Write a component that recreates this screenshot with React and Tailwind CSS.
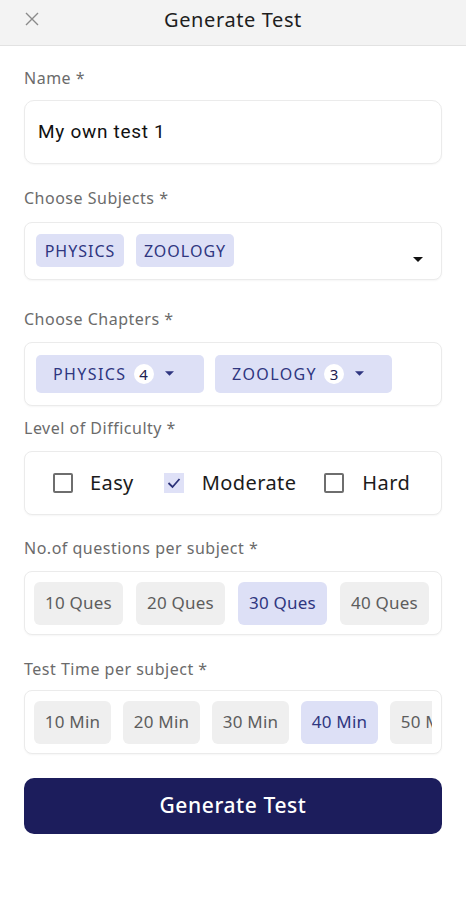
import React from "react";

const font = { fontFamily: '"Noto Sans", Lato, sans-serif' };

function Label({ children, className = "" }) {
  return (
    <div className={"text-[16px] leading-[20px] tracking-[0.5px] text-[#6b6b6b] " + className}>{children}</div>
  );
}

function Box({ children, className = "" }) {
  return (
    <div
      className={
        "rounded-[8px] border border-[#ebebeb] bg-white shadow-[0_1px_2px_rgba(0,0,0,0.04)] " +
        className
      }
    >
      {children}
    </div>
  );
}

function Caret({ className = "" }) {
  return (
    <svg width="10" height="6" viewBox="0 0 10 6" className={className}>
      <path d="M0 0 L10 0 L5 5 Z" fill="currentColor" />
    </svg>
  );
}

function Checkbox({ checked }) {
  if (checked)
    return (
      <div className="w-[20px] h-[20px] bg-[#dfe1f7] flex items-center justify-center">
        <svg width="14" height="12" viewBox="0 0 14 12">
          <path d="M1.5 6 L5.5 10 L12.5 2" fill="none" stroke="#2b3178" strokeWidth="1.8" />
        </svg>
      </div>
    );
  return <div className="w-[20px] h-[20px] border-[2px] border-[#6e6e6e] rounded-[2px]" />;
}

export default function App() {
  const ques = ["10 Ques", "20 Ques", "30 Ques", "40 Ques"];
  const mins = ["10 Min", "20 Min", "30 Min", "40 Min", "50 Min"];
  return (
    <div className="w-[466px] h-[900px] bg-white" style={font}>
      <div className="h-[46px] bg-[#f3f3f3] border-b border-[#e2e2e2] relative flex items-center justify-center">
        <svg width="14" height="14" viewBox="0 0 14 14" className="absolute left-[25px] top-[12px]">
          <path d="M1 1 L13 13 M13 1 L1 13" stroke="#8a8a8a" strokeWidth="1.4" />
        </svg>
        <div className="text-[20px] tracking-[0.6px] text-[#1e1e1e] -mt-[6px]">Generate Test</div>
      </div>

      <div className="px-[24px] pt-[22px]">
        <Label>Name *</Label>
        <Box className="mt-[12px] h-[64px] flex items-center px-[13px] rounded-[10px]">
          <span
            className="text-[19px] tracking-[0.7px] text-[#111]"
            style={{ fontFamily: 'Roboto, sans-serif' }}
          >
            My own test 1
          </span>
        </Box>

        <Label className="mt-[24px]">Choose Subjects *</Label>
        <Box className="mt-[14px] h-[58px] flex items-start pt-[11px] pl-[11px] pr-[16px] relative">
          <div className="flex gap-[12px]">
            {[
              ["PHYSICS", "w-[88px]"],
              ["ZOOLOGY", "w-[98px]"],
            ].map(([s, w]) => (
              <div
                key={s}
                className={
                  "h-[33px] rounded-[5px] bg-[#dde0f6] text-[#2f3680] text-[16px] flex items-center justify-center tracking-[1px] " +
                  w
                }
              >
                {s}
              </div>
            ))}
          </div>
          <Caret className="absolute right-[18px] top-[34px] text-[#111]" />
        </Box>

        <Label className="mt-[29px]">Choose Chapters *</Label>
        <Box className="mt-[13px] h-[64px] flex items-center pl-[11px] gap-[11px]">
          {[
            ["PHYSICS", "4", "w-[168px]"],
            ["ZOOLOGY", "3", "w-[177px]"],
          ].map(([s, n, w]) => (
            <div
              key={s}
              className={
                "h-[38px] rounded-[5px] bg-[#dde0f6] text-[#2f3680] text-[16px] flex items-center pl-[17px] gap-[7px] tracking-[1.4px] " +
                w
              }
            >
              <span>{s}</span>
              <span className="w-[20px] h-[20px] rounded-full bg-white flex items-center justify-center text-[15px] tracking-normal text-[#1e2250]">
                {n}
              </span>
              <Caret className="ml-[4px] text-[#2f3680] w-[9px]" />
            </div>
          ))}
        </Box>

        <Label className="mt-[12px]">Level of Difficulty *</Label>
        <Box className="mt-[13px] h-[64px] flex items-center pl-[28px]">
          <div className="flex items-center">
            <Checkbox />
            <span className="ml-[17px] text-[20px] tracking-[0.4px] text-[#1b1b1b]">Easy</span>
          </div>
          <div className="flex items-center ml-[30px]">
            <Checkbox checked />
            <span className="ml-[18px] text-[20px] tracking-[0.4px] text-[#1b1b1b]">Moderate</span>
          </div>
          <div className="flex items-center ml-[28px]">
            <Checkbox />
            <span className="ml-[18px] text-[20px] tracking-[0.4px] text-[#1b1b1b]">Hard</span>
          </div>
        </Box>

        <Label className="mt-[23px]">No.of questions per subject *</Label>
        <Box className="mt-[13px] h-[64px] flex items-center pl-[9px] gap-[13px]">
          {ques.map((q) => (
            <div
              key={q}
              className={
                "w-[89px] h-[43px] rounded-[6px] flex items-center justify-center text-[17px] tracking-[0.2px] " +
                (q === "30 Ques" ? "bg-[#dde0f6] text-[#2f3680]" : "bg-[#efefef] text-[#5d5d5d]")
              }
            >
              {q}
            </div>
          ))}
        </Box>

        <Label className="mt-[24px]">Test Time per subject *</Label>
        <Box className="mt-[11px] h-[64px] flex items-center pl-[9px] pr-[9px] overflow-hidden">
          <div className="flex gap-[12px] overflow-hidden w-full">
            {mins.map((m) => (
              <div
                key={m}
                className={
                  "shrink-0 w-[77px] h-[43px] rounded-[6px] flex items-center justify-center text-[17px] tracking-[0.2px] " +
                  (m === "40 Min" ? "bg-[#dde0f6] text-[#2f3680]" : "bg-[#efefef] text-[#5d5d5d]")
                }
              >
                {m}
              </div>
            ))}
          </div>
        </Box>

        <button className="mt-[24px] w-full h-[56px] rounded-[10px] bg-[#1c1d5c] text-white text-[21px] font-medium tracking-[0.6px] flex items-center justify-center">
          Generate Test
        </button>
      </div>
    </div>
  );
}
